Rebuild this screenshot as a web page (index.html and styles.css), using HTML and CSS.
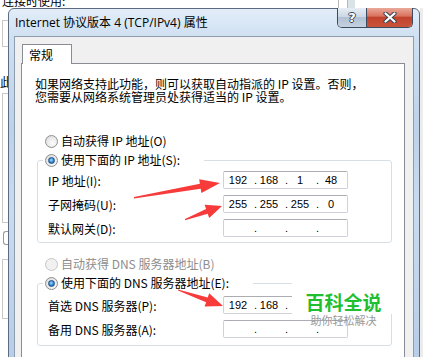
FILE: index.html
```html
<!DOCTYPE html>
<html lang="zh-CN">
<head>
  <meta charset="UTF-8" />
  <title>Internet 协议版本 4 (TCP/IPv4) 属性</title>
  <link rel="stylesheet" href="styles.css">
</head>
<body>

  <!-- window behind the dialog -->
  <div class="backdrop">
    <div class="backdrop-top">
      <span class="backdrop-label">连接时使用:</span>
      <span class="backdrop-field"></span>
    </div>
    <div class="backdrop-side">
      <div class="side-box short"></div>
      <div class="side-text">此</div>
      <div class="side-box tall"></div>
      <div class="side-btn"></div>
      <div class="side-box mid"></div>
    </div>
  </div>

  <div class="dialog">
    <div class="titlebar">
      <span class="title">Internet 协议版本 4 (TCP/IPv4) 属性</span>
      <div class="caption-buttons">
        <span class="btn-help">?</span>
        <span class="btn-close">
          <svg width="14" height="11" viewBox="0 0 14 11">
            <path d="M2.5 1.5 L11.5 9.5 M11.5 1.5 L2.5 9.5" stroke="#3a4658" stroke-width="4.2" stroke-linecap="round" fill="none"/>
            <path d="M2.5 1.5 L11.5 9.5 M11.5 1.5 L2.5 9.5" stroke="#fff" stroke-width="2.2" stroke-linecap="round" fill="none"/>
          </svg>
        </span>
      </div>
    </div>

    <div class="client">
      <div class="tabs">
        <span class="tab">常规</span>
      </div>

      <div class="tab-panel">
        <p class="intro">如果网络支持此功能，则可以获取自动指派的 IP 设置。否则，<br>您需要从网络系统管理员处获得适当的 IP 设置。</p>

        <div class="radio-row option-first"><span class="radio"></span>自动获得 IP 地址(O)</div>

        <fieldset class="group">
          <legend><span class="radio-row"><span class="radio checked"></span>使用下面的 IP 地址(S):</span></legend>
          <div class="field-grid">
            <span>IP 地址(I):</span>
            <div class="ip-box">
              <span class="ip-part">192</span><span class="ip-dot">.</span><span class="ip-part">168</span><span class="ip-dot">.</span><span class="ip-part">1</span><span class="ip-dot">.</span><span class="ip-part">48</span>
            </div>
            <span>子网掩码(U):</span>
            <div class="ip-box">
              <span class="ip-part">255</span><span class="ip-dot">.</span><span class="ip-part">255</span><span class="ip-dot">.</span><span class="ip-part">255</span><span class="ip-dot">.</span><span class="ip-part">0</span>
            </div>
            <span>默认网关(D):</span>
            <div class="ip-box">
              <span class="ip-part"></span><span class="ip-dot">.</span><span class="ip-part"></span><span class="ip-dot">.</span><span class="ip-part"></span><span class="ip-dot">.</span><span class="ip-part"></span>
            </div>
          </div>
        </fieldset>

        <div class="radio-row option-dns disabled"><span class="radio"></span>自动获得 DNS 服务器地址(B)</div>

        <fieldset class="group dns">
          <legend><span class="radio-row"><span class="radio checked"></span>使用下面的 DNS 服务器地址(E):</span></legend>
          <div class="field-grid">
            <span>首选 DNS 服务器(P):</span>
            <div class="ip-box">
              <span class="ip-part">192</span><span class="ip-dot">.</span><span class="ip-part">168</span><span class="ip-dot">.</span><span class="ip-part"></span>
            </div>
            <span>备用 DNS 服务器(A):</span>
            <div class="ip-box">
              <span class="ip-part"></span><span class="ip-dot">.</span><span class="ip-part"></span><span class="ip-dot">.</span><span class="ip-part"></span><span class="ip-dot">.</span><span class="ip-part"></span>
            </div>
          </div>
        </fieldset>
      </div>
    </div>
  </div>

  <!-- site watermark over the screenshot -->
  <div class="watermark">
    <div class="wm-title">百科全说</div>
    <div class="wm-sub">助你轻松解决</div>
  </div>

  <!-- red annotation arrows -->
  <svg class="arrows" width="423" height="357" viewBox="0 0 423 357">
    <polygon points="134,197 199.9,183.7 199.2,179.3 220,183 201.4,193.1 200.7,188.7 134,198.6" />
    <polygon points="185,219 206.1,208.9 204.6,204.7 222,206 209.2,217.9 207.7,213.7 185,220.2" />
    <polygon points="178,289.4 207.7,297.4 209.2,293.2 223,306 204.6,306.4 206.1,302.2 178,290.6" />
  </svg>

</body>
</html>
```

FILE: styles.css
```css
body {
  margin: 0;
  width: 423px;
  height: 357px;
  overflow: hidden;
  position: relative;
  font-family: "Noto Sans CJK SC", sans-serif;
  font-size: 12px;
  color: #000;
  background: linear-gradient(to right, #fff 420px, #ececec 420px);
}

/* background window */
.backdrop-top {
  display: flex;
  height: 8px;
  background: #fff;
}

.backdrop-label {
  margin: -6px 0 0 2px;
  line-height: 14px;
}

.backdrop-field {
  margin-left: auto;
  margin-right: 75px;
  width: 8px;
  border-left: 1px solid #b8b8b8;
  border-right: 1px solid #b8b8b8;
  box-shadow: 7px 0 0 #d8e4e6;
}

.backdrop-side {
  width: 8px;
}

.side-box {
  margin-left: 2px;
  border: 1px solid #c8c8c8;
  border-right: none;
}

.side-box.short {
  margin-top: 12px;
  height: 25px;
}

.side-box.tall {
  margin-top: 4px;
  height: 128px;
}

.side-box.mid {
  margin-top: 14px;
  height: 58px;
}

.side-text {
  margin-top: 28px;
  line-height: 14px;
}

.side-btn {
  margin: 8px 0 0 3px;
  height: 12px;
  border: 1px solid #9a9a9a;
  border-right: none;
  border-radius: 3px 0 0 3px;
}

/* dialog */
.dialog {
  position: absolute;
  left: 8px;
  top: 8px;
  width: 412px;
  height: 380px;
  box-sizing: border-box;
  padding: 0 5px;
  border: 1px solid #5b6c82;
  border-radius: 6px 6px 0 0;
  background: linear-gradient(to bottom, #e2edf8 0, #cfe0f2 28px, #bcd2ea 120px, #c9dbef 200px, #b3cbe7 100%);
}

.titlebar {
  height: 27px;
  display: flex;
  justify-content: space-between;
  align-items: flex-start;
}

.title {
  padding: 6px 0 0 1px;
  font-family: "Open Sans", "Noto Sans CJK SC", sans-serif;
  font-size: 12px;
  line-height: 16px;
  white-space: nowrap;
}

.caption-buttons {
  display: flex;
  height: 19px;
  margin: -1px 1px 0 0;
  border: 1px solid #3d4b5e;
  border-top: none;
  border-radius: 0 0 5px 5px;
  overflow: hidden;
}

.btn-help {
  width: 28px;
  border-right: 1px solid #3d4b5e;
  background: linear-gradient(to bottom, #e6edf5 0, #cdd8e5 45%, #b2c1d3 50%, #c4d1e0 100%);
  color: #fff;
  font-family: "DejaVu Sans", sans-serif;
  font-weight: bold;
  font-size: 13px;
  line-height: 19px;
  text-align: center;
  text-shadow: 1px 0 0 #3a4658, -1px 0 0 #3a4658, 0 1px 0 #3a4658, 0 -1px 0 #3a4658;
}

.btn-close {
  width: 45px;
  display: flex;
  align-items: center;
  justify-content: center;
  background: linear-gradient(to bottom, #eaa999 0, #d9735f 42%, #c2432d 50%, #c9533b 100%);
}

.client {
  height: 360px;
  padding: 7px 8px 0 6px;
  border: 1px solid #8e9cad;
  background: #f0f0f0;
}

.tabs {
  display: flex;
  padding-left: 1px;
}

.tab {
  position: relative;
  z-index: 1;
  width: 50px;
  height: 20px;
  box-sizing: border-box;
  margin-bottom: -1px;
  padding-left: 6px;
  border: 1px solid #898c95;
  border-bottom: none;
  background: #fff;
  line-height: 20px;
}

.tab-panel {
  height: 320px;
  padding: 13px 12px 0 15px;
  border: 1px solid #898c95;
  background: #fff;
}

.intro {
  margin: 0 0 0 -2px;
  line-height: 13px;
  white-space: nowrap;
}

.radio-row {
  display: flex;
  align-items: center;
  gap: 3px;
  height: 14px;
  line-height: 14px;
  white-space: nowrap;
}

.option-first {
  margin: 31px 0 0 8px;
}

.option-dns {
  margin: 14px 0 0 8px;
}

.disabled {
  color: #8d8d8d;
}

.radio {
  position: relative;
  width: 13px;
  height: 13px;
  box-sizing: border-box;
  border: 1px solid #8f8f8f;
  border-radius: 50%;
  background: radial-gradient(circle at 60% 65%, #fdfdfd 0, #e9e9e9 55%, #d2d2d2 100%);
}

.disabled .radio {
  border-color: #c6c6c6;
  background: #f1f1f1;
}

.radio.checked::after {
  content: "";
  position: absolute;
  left: 2px;
  top: 2px;
  width: 7px;
  height: 7px;
  box-sizing: border-box;
  border: 1px solid #1b4f86;
  border-radius: 50%;
  background: radial-gradient(circle at 45% 40%, #a6dcff 0, #3a8fd6 50%, #0d4d93 100%);
}

.group {
  width: 355px;
  box-sizing: border-box;
  margin: 5px 0 0;
  padding: 4px 0 5px 10px;
  border: 1px solid #d5dfe5;
  border-radius: 3px;
}

.group.dns {
  padding-top: 6px;
  padding-bottom: 7px;
}

.group legend {
  margin-left: -5px;
  padding: 0 24px 0 2px;
}

.field-grid {
  display: grid;
  grid-template-columns: 175px 125px;
  row-gap: 6px;
  align-items: center;
}

.field-grid > span {
  white-space: nowrap;
}

.ip-box {
  display: flex;
  height: 18px;
  box-sizing: border-box;
  padding-left: 2px;
  border: 1px solid #cfd3d9;
  border-top-color: #abadb3;
  border-radius: 2px;
  font-family: "Liberation Sans", sans-serif;
  font-size: 11px;
  line-height: 16px;
}

.ip-part {
  width: 24px;
  text-align: center;
}

.ip-dot {
  width: 7px;
  text-align: right;
}

/* watermark */
.watermark {
  position: absolute;
  left: 292px;
  top: 279px;
  width: 103px;
  text-align: center;
}

.wm-title {
  padding-top: 11px;
  background: #fff;
  color: #1fbf2f;
  font-size: 19px;
  font-weight: bold;
  line-height: 24px;
}

.wm-sub {
  color: #9a9a9a;
  font-size: 11px;
  line-height: 12px;
}

.arrows {
  position: absolute;
  left: 0;
  top: 0;
  pointer-events: none;
}

.arrows polygon {
  fill: #f73b3b;
}
```
